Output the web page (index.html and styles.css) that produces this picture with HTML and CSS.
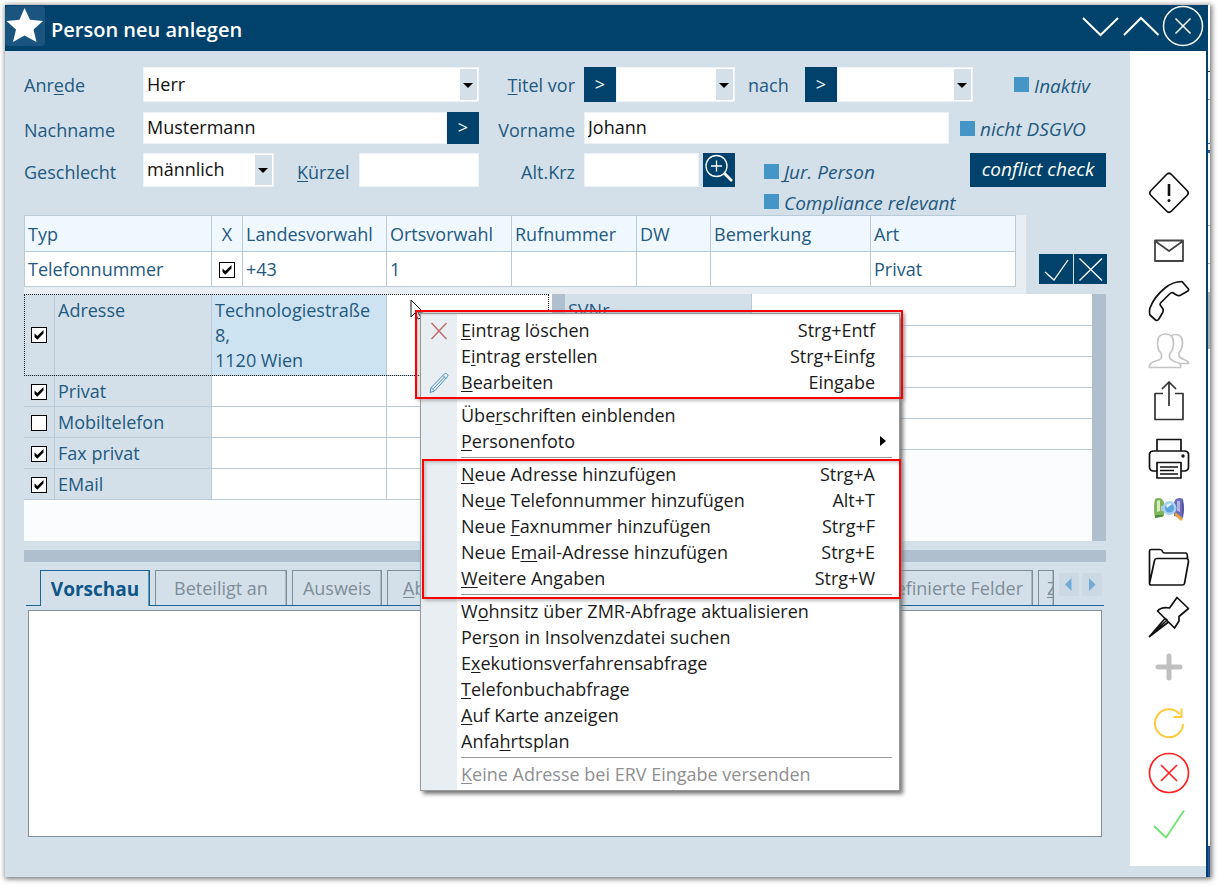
FILE: index.html
```html
<!DOCTYPE html>
<html lang="de">
<head>
<meta charset="utf-8">
<title>Person neu anlegen</title>
<link rel="stylesheet" href="styles.css">
</head>
<body>
<div class="frame">
<div class="window">
  <header class="titlebar">
    <svg class="app-icon" width="40" height="40" viewBox="0 0 40 40"><rect width="40" height="40" rx="4" fill="#19557f"/><path fill="#fff" d="M19.500 2 25 13.800 38 15 28.500 23.500 31.500 36 19.500 29.500 8 36 11 23.500 1.500 15 14.500 13.800z"/></svg>
    <h1>Person neu anlegen</h1>
    <div class="caption">
      <button type="button" aria-label="Minimieren"><svg width="39" height="42" viewBox="0 0 39 42"><path d="M1 13 18.500 30 36 13"/></svg></button>
      <button type="button" aria-label="Maximieren"><svg width="41" height="42" viewBox="0 0 41 42"><path d="M3 30 20 13 37.500 30"/></svg></button>
      <button type="button" aria-label="Schließen"><svg width="42" height="42" viewBox="0 0 42 42"><circle cx="21" cy="21" r="19.500" stroke-width="1.500"/><path stroke-width="1.500" d="M13.500 13.500 28.500 28.500M28.500 13.500 13.500 28.500"/></svg></button>
    </div>
  </header>
  <div class="body">
    <main class="main">
      <form class="form">
        <div class="row row-tall">
          <label for="anrede">Anr<u>e</u>de</label>
          <div class="combo"><select id="anrede"><option>Herr</option></select></div>
          <label class="right" for="titelvor"><u>T</u>itel vor</label>
          <div class="cell">
            <button type="button" class="dark pick">&gt;</button>
            <div class="combo combo-vor"><select id="titelvor"><option></option></select></div>
            <label class="nach" for="titelnach">nach</label>
            <button type="button" class="dark pick">&gt;</button>
            <div class="combo combo-nach"><select id="titelnach"><option></option></select></div>
            <label class="flag flag-inaktiv"><input type="checkbox"><span>Inaktiv</span></label>
          </div>
        </div>
        <div class="row">
          <label for="nachname">Nachname</label>
          <div class="cell"><input class="field grow" id="nachname" type="text" value="Mustermann"><button type="button" class="dark pick">&gt;</button></div>
          <label class="right" for="vorname">Vorname</label>
          <div class="cell">
            <input class="field grow" id="vorname" type="text" value="Johann">
            <label class="flag flag-dsgvo"><input type="checkbox"><span>nicht DSGVO</span></label>
          </div>
        </div>
        <div class="row row-third">
          <label for="geschlecht">Geschlecht</label>
          <div class="cell">
            <div class="combo combo-sex"><select id="geschlecht"><option>männlich</option></select></div>
            <label class="kuerzel" for="kuerzel"><u>K</u>ürzel</label>
            <input class="field grow" id="kuerzel" type="text">
          </div>
          <label class="right" for="altkrz">Alt.Krz</label>
          <div class="cell">
            <input class="field altkrz" id="altkrz" type="text">
            <button type="button" class="dark pick" aria-label="Suchen"><svg width="32" height="32" viewBox="0 0 32 32" fill="none" stroke="#fff"><circle cx="13.500" cy="13" r="10.500" stroke-width="1.300"/><path stroke-width="1.300" d="M8 13h11M13.500 7.500v11"/><path stroke-width="2.600" d="m21 20 8 8"/></svg></button>
            <label class="flag flag-jur"><input type="checkbox"><span><u>J</u>ur. Person</span></label>
            <button type="button" class="dark conflict">conflict check</button>
          </div>
        </div>
        <div class="row row-last">
          <label class="flag flag-comp"><input type="checkbox"><span>Compliance relevant</span></label>
        </div>
      </form>

      <section class="phone">
        <div class="phone-wrap">
          <table class="phone-table">
            <colgroup><col class="p1"><col class="p2"><col class="p3"><col class="p4"><col class="p5"><col class="p6"><col class="p7"><col class="p8"></colgroup>
            <thead><tr><th>Typ</th><th class="mid">X</th><th>Landesvorwahl</th><th>Ortsvorwahl</th><th>Rufnummer</th><th>DW</th><th>Bemerkung</th><th>Art</th></tr></thead>
            <tbody><tr><td>Telefonnummer</td><td class="mid"><input class="tick" type="checkbox" checked aria-label="Telefonnummer"></td><td>+43</td><td>1</td><td></td><td></td><td></td><td>Privat</td></tr></tbody>
          </table>
        </div>
        <div class="phone-actions">
          <button type="button" class="dark" aria-label="Übernehmen"><svg width="34" height="30" viewBox="0 0 34 30"><path d="m6 18 9 8L29 6"/></svg></button>
          <button type="button" class="dark" aria-label="Verwerfen"><svg width="33" height="30" viewBox="0 0 33 30"><path d="M5.500 4.500 28 26.500M28 4.500 5.500 26.500"/></svg></button>
        </div>
      </section>

      <section class="details">
        <div class="left-list">
          <table class="list">
            <colgroup><col class="l1"><col class="l2"><col class="l3"><col></colgroup>
            <tbody>
              <tr class="current"><td class="head mid"><input class="tick" type="checkbox" checked aria-label="Adresse"></td><td class="head top">Adresse</td><td class="selected">Technologiestraße 8,<br>1120 Wien</td><td></td></tr>
              <tr><td class="head mid"><input class="tick" type="checkbox" checked aria-label="Privat"></td><td class="head">Privat</td><td></td><td></td></tr>
              <tr><td class="head mid"><input class="tick" type="checkbox" aria-label="Mobiltelefon"></td><td class="head">Mobiltelefon</td><td></td><td></td></tr>
              <tr><td class="head mid"><input class="tick" type="checkbox" checked aria-label="Fax privat"></td><td class="head">Fax privat</td><td></td><td></td></tr>
              <tr><td class="head mid"><input class="tick" type="checkbox" checked aria-label="EMail"></td><td class="head">EMail</td><td></td><td></td></tr>
            </tbody>
          </table>
        </div>
        <div class="bar bar-mid"></div>
        <div class="right-list">
          <table class="list">
            <colgroup><col class="r1"><col></colgroup>
            <tbody>
              <tr class="first"><td class="head">SVNr</td><td></td></tr>
              <tr><td class="head"></td><td></td></tr>
              <tr><td class="head"></td><td></td></tr>
              <tr><td class="head"></td><td></td></tr>
              <tr><td class="head"></td><td></td></tr>
            </tbody>
          </table>
        </div>
        <div class="bar"></div>
      </section>

      <div class="splitter"></div>

      <nav class="tabs">
        <button type="button" class="tab tab-active">Vorschau</button>
        <button type="button" class="tab tab-wide">Beteiligt an</button>
        <button type="button" class="tab tab-id">Ausweis</button>
        <button type="button" class="tab tab-rest"><u>A</u>b</button>
        <button type="button" class="tab tab-custom">Benutzerdefinierte Felder</button>
        <button type="button" class="tab tab-cut"><u>Z</u></button>
        <div class="tab-scroll">
          <button type="button" aria-label="Zurück"><svg width="20" height="23" viewBox="0 0 20 23"><path d="M12.500 5v13L6 11.500z"/></svg></button>
          <button type="button" aria-label="Weiter"><svg width="20" height="23" viewBox="0 0 20 23"><path d="M7 5v13l6.500-6.500z"/></svg></button>
        </div>
      </nav>
      <section class="preview"></section>

      <svg class="cursor" width="14" height="22" viewBox="0 0 14 22"><path d="M1 1v17l4-4 3 6 3-1-3-6h5z" fill="#fff" stroke="#111"/></svg>

      <div class="menu" role="menu">
        <a href="#" class="item" role="menuitem"><svg class="ico" width="20" height="20" viewBox="0 0 20 20"><path d="m2.500 3 15 16M17.500 3l-15 16" stroke="#c06a6a" stroke-width="1.400"/></svg><span><u>E</u>intrag löschen</span><kbd>Strg+Entf</kbd></a>
        <a href="#" class="item" role="menuitem"><i class="ico"></i><span>E<u>i</u>ntrag erstellen</span><kbd>Strg+Einfg</kbd></a>
        <a href="#" class="item" role="menuitem"><svg class="ico" width="20" height="22" viewBox="0 0 20 22"><path d="m1 21.500 1.200-5L15.500 2.800c1.500-1.500 4.500 1 3 2.800L5.500 20zM2.200 16.500 5.500 20M14 4.500l3 3M4.500 17.500 15.500 6" fill="none" stroke="#4b8fbd"/></svg><span><u>B</u>earbeiten</span><kbd>Eingabe</kbd></a>
        <hr>
        <a href="#" class="item" role="menuitem"><i class="ico"></i><span>Übe<u>r</u>schriften einblenden</span></a>
        <a href="#" class="item sub" role="menuitem"><i class="ico"></i><span><u>P</u>ersonenfoto</span></a>
        <hr>
        <a href="#" class="item" role="menuitem"><i class="ico"></i><span><u>N</u>eue Adresse hinzufügen</span><kbd>Strg+A</kbd></a>
        <a href="#" class="item" role="menuitem"><i class="ico"></i><span>Ne<u>u</u>e Telefonnummer hinzufügen</span><kbd>Alt+T</kbd></a>
        <a href="#" class="item" role="menuitem"><i class="ico"></i><span>Neue <u>F</u>axnummer hinzufügen</span><kbd>Strg+F</kbd></a>
        <a href="#" class="item" role="menuitem"><i class="ico"></i><span>Neue E<u>m</u>ail-Adresse hinzufügen</span><kbd>Strg+E</kbd></a>
        <a href="#" class="item" role="menuitem"><i class="ico"></i><span><u>W</u>eitere Angaben</span><kbd>Strg+W</kbd></a>
        <hr>
        <a href="#" class="item" role="menuitem"><i class="ico"></i><span>W<u>o</u>hnsitz über ZMR-Abfrage aktualisieren</span></a>
        <a href="#" class="item" role="menuitem"><i class="ico"></i><span>Per<u>s</u>on in Insolvenzdatei suchen</span></a>
        <a href="#" class="item" role="menuitem"><i class="ico"></i><span>E<u>x</u>ekutionsverfahrensabfrage</span></a>
        <a href="#" class="item" role="menuitem"><i class="ico"></i><span><u>T</u>elefonbuchabfrage</span></a>
        <a href="#" class="item" role="menuitem"><i class="ico"></i><span><u>A</u>uf Karte anzeigen</span></a>
        <a href="#" class="item" role="menuitem"><i class="ico"></i><span>Anfa<u>h</u>rtsplan</span></a>
        <hr>
        <a href="#" class="item off" role="menuitem" aria-disabled="true"><i class="ico"></i><span><u>K</u>eine Adresse bei ERV Eingabe versenden</span></a>
        <div class="mark mark-edit"></div>
        <div class="mark mark-add"></div>
      </div>
    </main>

    <aside class="tools">
      <div class="group">
        <button type="button" aria-label="Hinweis"><svg viewBox="0 0 42 42"><path d="M18.500 2.500q2.500-2.500 5 0l15.500 16q2.500 2.500 0 5l-15.500 15.500q-2.500 2.500-5 0l-15.500-15.500q-2.500-2.500 0-5z"/><path stroke-width="2.600" d="M21 12v12"/><circle cx="21" cy="28.500" r="1.500" fill="#111" stroke="none"/></svg></button>
      </div>
      <div class="group">
        <button type="button" aria-label="E-Mail"><svg viewBox="0 0 42 42"><path stroke="#444" stroke-width="1.800" d="M7 10.500h28v20.500H7zM7 11l14 10 14-10"/></svg></button>
        <button type="button" aria-label="Telefon"><svg viewBox="0 0 42 42"><path d="M34 1.500 40.500 9q.5 1.500-1.500 2.500l-7 4q-2 .5-3.500-.5l-4-2.500q-1.500 0-3 1.500L13 22.500q-1.500 1.500-.5 3L15 29q.5 2-.5 4l-4 6.500q-1.500 1.500-3 .5L2 35q-1-3 0-7Q6 17 17 8q8-6.500 17-6.500z"/></svg></button>
        <button type="button" aria-label="Personen"><svg viewBox="0 0 42 42"><path stroke="#c4c4c4" d="M1.500 37.500v-2q1-3 6-4.500 5-1 6-3.500l0-3.500q-4-4-4-11Q9.500 4 17.500 4t8 9q0 7-4 11v3.500q1 2.500 6 4.500 5 1 5 3l0 2.500zM23 6q2-1.500 5-1.500 6 0 6.500 8 0 6-3.500 10.500v3q1 2 5 3.500 4.500 1.500 4.500 4h-8"/></svg></button>
        <button type="button" aria-label="Teilen"><svg viewBox="0 0 42 42"><path stroke="#333" d="M15 13.500H7v26h28v-26h-8M21 26V2M14 9l7-7 7 7"/></svg></button>
      </div>
      <div class="group">
        <button type="button" aria-label="Drucken"><svg viewBox="0 0 42 42"><path d="M9 13V1.500h24V13M9 33H5q-3.500-.5-3.500-4V16q.5-3 4-3h31q3.500 0 4 3v13q0 3.500-3.500 4h-4M9 24.500h24V40H9zM12 29h18M12 32.500h14M12 36h18"/><circle cx="35" cy="18" r="1.700" fill="#111" stroke="none"/></svg></button>
        <button type="button" aria-label="Abgleich"><svg class="solid" viewBox="0 0 42 42"><path fill="#7fb558" d="M7 11q4-2 7 0l2 3v14l-9 2q-2-10 0-19z"/><path fill="#d6edbb" d="m9 13 3-1v11l-3 1z"/><path fill="#4c8a3a" d="M7 27h8v1.500l-8 1.500z"/><path fill="#b9c6d6" d="M13 18h16v5H13z"/><path fill="#6b6bb8" d="M28 11q4-2 7 0 2 10 0 19l-9-2V14z"/><path fill="#b4b4e4" d="M29 13h3v11l-3-1z"/><path fill="#3d3d82" d="M34.500 11.500q2 9 0 18z"/><circle cx="21.500" cy="20" r="7" fill="#a6cff0"/><circle cx="21.500" cy="20" r="4.500" fill="#5fa3de"/><path fill="#e5f3ff" d="M18 17q3-3 6-1l-5 4z"/><path fill="#e5a13a" d="m26 26.500 2-2 7 6-2 2.500z"/></svg></button>
      </div>
      <div class="group">
        <button type="button" aria-label="Ordner"><svg viewBox="0 0 42 42"><path d="M1.500 37.500V5q0-1.500 1.500-1.500h9q2 0 2.500 2 .5 1.500 2.500 1.500h21q1.500.5 1.500 5.500M1.500 37.500q0 1.500 2 1.500h31q1.500 0 2-1.500l4-22q0-3-2-3H9q-2 0-2.500 2z"/></svg></button>
        <button type="button" aria-label="Anheften"><svg viewBox="0 0 42 42"><path d="M29 1.500 40.500 12.500 31 20.500 31 25 26.500 32 9.500 15q4-4.500 12-3zM17 22.500 1.500 40.500 20.500 26M17 22.500 19 24 1.500 40.500"/></svg></button>
        <button type="button" aria-label="Hinzufügen"><svg viewBox="0 0 42 42"><path stroke="#c0c0c0" stroke-width="5" stroke-linecap="round" d="M21 10v22M10 21h22"/></svg></button>
      </div>
      <div class="group group-end">
        <button type="button" aria-label="Aktualisieren"><svg viewBox="0 0 42 42"><path stroke="#ffc93c" stroke-width="2" d="M35 22A14 14 0 1 1 31.500 12M33.500 6.500v8.500h-8"/></svg></button>
        <button type="button" aria-label="Abbrechen"><svg viewBox="0 0 42 42"><g stroke="#f22"><circle cx="21" cy="21" r="19.500"/><path d="m13 13 16 16M29 13 13 29"/></g></svg></button>
        <button type="button" aria-label="Speichern"><svg viewBox="0 0 42 42"><path stroke="#6ee36e" stroke-width="1.800" d="m6 24 12 11.500L36 8.500"/></svg></button>
      </div>
    </aside>
  </div>
</div>
<div class="backdrop"></div>
</div>
</body>
</html>
```
FILE: styles.css
```css
* { box-sizing: border-box; }
body {
  margin: 0;
  padding: 5px 9px 9px 5px;
  background: #fff;
  color: #23597f;
  font-family: "Open Sans", "Liberation Sans", sans-serif;
  font-size: 18px;
  line-height: 26px;
}
button, input, select { font: inherit; color: inherit; margin: 0; padding: 0; border: 0; border-radius: 0; background: none; }
u { text-decoration-thickness: 1px; text-underline-offset: 2px; text-decoration-skip-ink: none; }
svg { display: block; }

.frame { display: flex; min-height: calc(100vh - 14px); box-shadow: 1px 1px 5px 1px #777; }
.window { flex: 1; min-width: 0; display: flex; flex-direction: column; background: #d4e0e9; }
.backdrop {
  width: 2px;
  background: linear-gradient(#333, #333) 0 66px / 2px 1px no-repeat,
    linear-gradient(#999, #999) 0 94px / 2px 1px no-repeat,
    linear-gradient(#36599b, #36599b) 0 138px / 2px 1px no-repeat,
    linear-gradient(#36599b, #36599b) 0 145px / 2px 3px no-repeat,
    linear-gradient(#aaa, #aaa) 0 220px / 2px 1px no-repeat,
    linear-gradient(#aaa, #aaa) 0 258px / 2px 1px no-repeat,
    linear-gradient(#b0b0b0, #b0b0b0) 0 287px / 2px 57px no-repeat,
    linear-gradient(#2b4f96, #2b4f96) 0 100% / 2px 31px no-repeat, #fff;
}

.titlebar { display: flex; align-items: center; height: 46px; background: #00426b; color: #fff; }
.app-icon { margin-bottom: 4px; }
.titlebar h1 { flex: 1; margin: 4px 0 0 6px; font-size: 20px; font-weight: 600; }
.caption { display: flex; padding: 0 4px 4px 0; }
.caption svg { fill: none; stroke: #fff; stroke-width: 2; }

.body { flex: 1; display: flex; border-right: 2px solid #00426b; }
.main { position: relative; flex: 1; min-width: 0; display: flex; flex-direction: column; padding: 16px 24px 40px 19px; }
.tools { width: 76px; margin-bottom: 11px; padding: 117px 0 0 2px; background: #fff; }
.group { display: flex; flex-direction: column; }
.group + .group { margin-top: 8px; }
.group + .group-end { margin-top: 6px; }
.tools button { height: 50px; display: flex; align-items: center; justify-content: center; }
.tools svg { width: 42px; height: 42px; fill: none; stroke: #111; stroke-width: 1.700; stroke-linejoin: round; }
.tools .solid { stroke: none; }

.row { display: grid; grid-template-columns: 119px 336fr 105px 522fr; height: 32px; margin-bottom: 9px; }
.row-tall { height: 35px; margin-bottom: 10px; }
.row-third { margin-bottom: 0; }
.row-last { display: flex; height: 30px; margin: 0; padding: 3px 0 0 740px; }
.row > label, .nach, .kuerzel { align-self: center; padding-top: 4px; }
.row-tall > label, .row-tall .nach { padding-top: 1px; }
.row > .right { text-align: right; padding-right: 9px; }
.cell { display: flex; min-width: 0; }
.grow { flex: 1; }
.field { min-width: 0; padding: 0 3px 2px; border: 1px solid #edf3f7; background: #fff; color: #111; }
.combo { position: relative; background: #fff; border: 1px solid #edf3f7; display: flex; }
.combo select { appearance: none; flex: 1; min-width: 0; padding: 0 22px 2px 3px; color: #111; }
.combo::before { content: ""; position: absolute; top: 1px; bottom: 1px; right: 1px; width: 17px; background: #d4e0e9; }
.combo::after { content: ""; position: absolute; top: 50%; right: 5px; border: 5px solid transparent; border-top-color: #000; border-bottom: 0; margin-top: -2px; }
.combo-vor { width: 119px; }
.combo-nach { flex: 1; }
.combo-sex { width: 131px; }
.nach { width: 70px; padding-left: 13px; }
.kuerzel { width: 85px; padding-left: 23px; }
.altkrz { width: 115px; margin-right: 4px; }
.dark { background: #00426b; color: #fff; }
.pick { width: 32px; padding-bottom: 2px; display: flex; align-items: center; justify-content: center; }
.flag { display: flex; align-items: center; gap: 5px; font-size: 19px; font-style: italic; white-space: nowrap; }
.flag input { appearance: none; width: 15px; height: 15px; background: #4596c6; }
.flag span { padding-top: 2px; }
.flag-inaktiv { width: 133px; padding-left: 41px; }
.flag-dsgvo { width: 157px; padding-left: 11px; }
.flag-jur { flex: 1; padding: 2px 0 0 29px; }
.row > .flag-comp { padding-top: 0; align-self: center; }
.conflict { width: 136px; padding-bottom: 2px; font-size: 19px; font-style: italic; }

.phone { display: flex; align-items: flex-end; }
.phone-wrap { flex: 1; padding: 0 10px 7px 0; background: #e9eef2; }
table { width: 100%; border-collapse: separate; border-spacing: 0; table-layout: fixed; }
th { font-weight: 400; text-align: left; }
.phone-table { border-left: 1px solid #b9cad8; border-top: 1px solid #b9cad8; }
.phone-table th, .phone-table td { height: 35px; padding: 0 3px; border-right: 1px solid #b9cad8; border-bottom: 1px solid #b9cad8; background: #fff; white-space: nowrap; }
.phone-table th { height: 36px; background: #f0f8ff; }
.phone-table .mid, .list .mid { text-align: center; padding: 0; line-height: 24px; }
.p1 { width: 187px; } .p2 { width: 31px; } .p3 { width: 144px; } .p4 { width: 125px; }
.p5 { width: 125px; } .p6 { width: 74px; } .p7 { width: 160px; } .p8 { width: 145px; }
.phone-actions { display: flex; gap: 1px; padding: 0 0 10px 13px; }
.phone-actions svg { fill: none; stroke: #fff; stroke-width: 1.300; }
.tick { appearance: none; display: inline-block; vertical-align: middle; width: 16px; height: 16px; margin-bottom: 3px; border: 1px solid #000; background: #fff; }
.tick:checked::before { content: ""; display: block; width: 14px; height: 14px; background: #000; clip-path: polygon(18% 42%, 38% 60%, 82% 16%, 82% 42%, 38% 86%, 18% 66%); }

.details { display: flex; min-height: 247px; background: #fbfcfe; }
.left-list { flex: 525; padding-right: 3px; min-width: 0; }
.right-list { flex: 527; min-width: 0; }
.bar { width: 14px; background: #afbfcd; }
.bar-mid { width: 13px; }
.list td { height: 31px; padding: 0 3px; border-right: 1px solid #b9cad8; border-bottom: 1px solid #b9cad8; background: #fff; }
.list .first td { height: 32px; }
.list td:last-child { border-right: 0; }
.list td.head { background: #d4e0e9; }
.list .current td { height: 82px; vertical-align: top; padding-top: 4px; line-height: 25px; }
.list .current td.mid { vertical-align: middle; padding: 0; }
.list .current td.selected { background: #cee3f1; padding-right: 0; }
.current { outline: 1px dotted #222; outline-offset: -1px; }
.l1 { width: 31px; } .l2 { width: 157px; } .l3 { width: 175px; } .r1 { width: 187px; }
.splitter { height: 12px; margin-top: 9px; background: #afbfcd; }

.tabs { display: flex; gap: 5px; height: 36px; margin: 8px 2px 0; padding-left: 14px; border-bottom: 1px solid #1f6492; }
.tab { flex: none; height: 35px; padding: 0 9px; border: 1px solid #7c8f9b; border-bottom: 0; color: #7d8d99; box-shadow: inset -1px 0 #a9b7c2; white-space: nowrap; }
.tab-active { width: 110px; height: 36px; background: #d4e0e9; border-color: #1f6492; color: #0c5688; font-size: 19px; font-weight: 700; box-shadow: inset -1px 0 #6695b5; }
.tab-wide { width: 132px; }
.tab-id { width: 90px; }
.tab-rest { flex: 1; padding-left: 15px; text-align: left; }
.tab-cut { width: 16px; padding: 0 0 0 8px; overflow: hidden; text-align: left; }
.tab-scroll { display: flex; gap: 3px; padding: 3px 2px 0 0; }
.tab-scroll button { height: 23px; background: #cbd9e4; }
.tab-scroll path { fill: #6fabd5; }
.preview { flex: 1; margin: 4px 4px 0; border: 1px solid #808f9e; background: #fff; }

.cursor { position: absolute; left: 405px; top: 248px; }
.menu { position: absolute; left: 415px; top: 262px; width: 480px; padding: 3px 2px; border: 1px solid #999; background: linear-gradient(90deg, #e9eef2 36px, #fff 36px); box-shadow: 3px 3px 4px #777; color: #1b1b1b; }
.item { display: flex; align-items: center; height: 26px; padding-right: 22px; color: inherit; text-decoration: none; white-space: nowrap; }
.item span { flex: 1; }
.item kbd { font: inherit; }
.ico { width: 20px; margin: 0 12px 0 6px; flex: none; }
.sub::after { content: ""; border: 5px solid transparent; border-left: 6px solid #000; border-right: 0; margin-right: -11px; }
.off { color: #8f8f8f; }
.menu hr { height: 1px; margin: 3px 5px 3px 38px; border: 0; background: #999; }
.mark { position: absolute; border: 2px solid #f00; box-shadow: 2px 2px 3px #8888, inset 2px 2px 3px #8886; pointer-events: none; }
.mark-edit { left: -6px; right: -4px; top: -4px; height: 89px; }
.mark-add { left: 1px; right: -2px; top: 145px; height: 140px; }
```
